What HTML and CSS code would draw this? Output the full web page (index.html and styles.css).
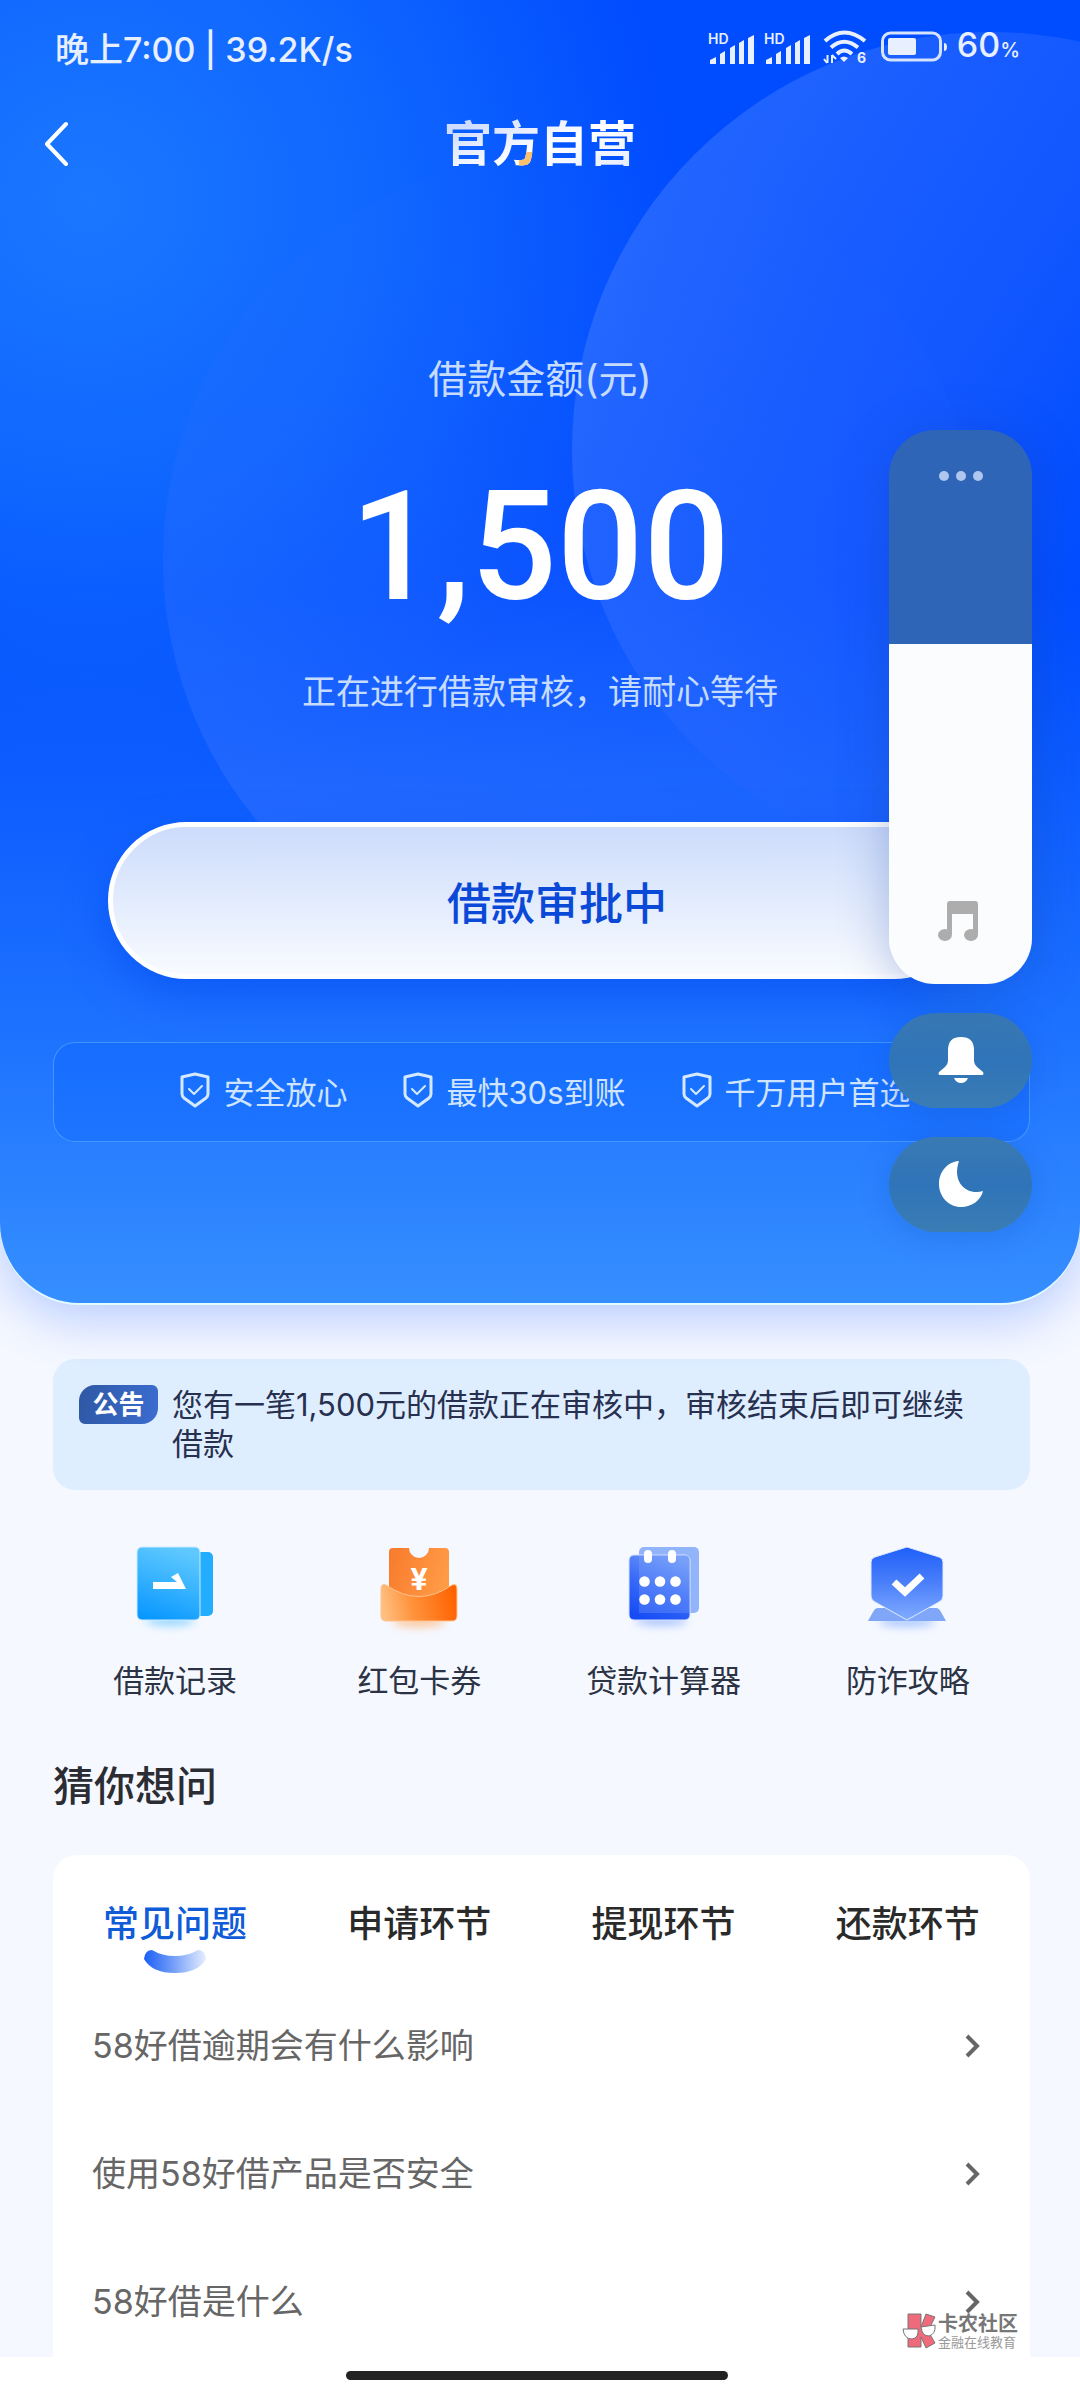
FILE: index.html
```html
<!DOCTYPE html>
<html lang="zh-CN">
<head>
<meta charset="utf-8">
<meta name="viewport" content="width=device-width, initial-scale=1">
<title>官方自营</title>
<link rel="stylesheet" href="styles.css">
</head>
<body>
<div class="app">
  <header class="hero">
    <svg class="hero-art" viewBox="0 0 1080 1303" preserveAspectRatio="xMidYMin slice" aria-hidden="true">
      <defs>
        <linearGradient id="orbA" x1="0" y1="0.3" x2=".8" y2="0.8">
          <stop offset="0" stop-color="#3f7bff" stop-opacity=".55"/>
          <stop offset=".5" stop-color="#2a66ff" stop-opacity=".4"/>
          <stop offset=".8" stop-color="#1a5cff" stop-opacity="0"/>
        </linearGradient>
        <linearGradient id="orbB" x1=".7" y1="0" x2=".4" y2="1">
          <stop offset="0" stop-color="#2e6dff" stop-opacity="0"/>
          <stop offset=".4" stop-color="#2e6dff" stop-opacity=".15"/>
          <stop offset="1" stop-color="#3d78ff" stop-opacity=".5"/>
        </linearGradient>
      </defs>
      <circle cx="572" cy="560" r="409" fill="url(#orbB)"/>
      <circle cx="990" cy="450" r="418" fill="url(#orbA)"/>
    </svg>

    <div class="status">
      <span class="status-left">晚上7:00 | 39.2K/s</span>
      <div class="status-right">
        <svg width="48" height="40" viewBox="0 -6 48 40" fill="#e8efff" aria-label="HD 信号">
          <text x="1" y="11" class="hd">HD</text>
          <path d="M3 31v-4l6-3v7zM13 31v-10l5-3v13zM23 31V15l5-3v19zM32 31V10l5-3v24zM41 31V5l6-3v29z"/>
        </svg>
        <svg width="48" height="40" viewBox="0 -6 48 40" fill="#e8efff" aria-label="HD 信号">
          <text x="1" y="11" class="hd">HD</text>
          <path d="M3 31v-4l6-3v7zM13 31v-10l5-3v13zM23 31V15l5-3v19zM32 31V10l5-3v24zM41 31V5l6-3v29z"/>
        </svg>
        <svg class="wifi" width="46" height="42" viewBox="0 -4 46 42" fill="none" stroke="#e8efff" stroke-width="4" aria-label="Wi-Fi 6">
          <path d="M2 11Q21-6 42 11M8 17.500Q21 6 35 17.500M14 24Q21 17 29 24"/>
          <path d="M17 28q4-3 8 0l-4 4z" fill="#e8efff" stroke="none"/>
          <path d="M4.500 25v8M9 25v8M1 29l3 4M9 25l4 4" stroke-width="2"/>
          <text x="34" y="33" class="six">6</text>
        </svg>
        <svg class="battery" width="68" height="32" viewBox="0 0 68 32" fill="none" aria-label="电池">
          <rect x="1.500" y="2" width="58" height="27" rx="8" stroke="#d5e3ff" stroke-width="3"/>
          <rect x="7" y="7" width="28" height="17" rx="2" fill="#e8efff"/>
          <path d="M63 12q3 0 3 4t-3 4z" fill="#e8efff"/>
        </svg>
        <span class="percent">60<small>%</small></span>
      </div>
    </div>

    <nav class="nav">
      <button class="back" aria-label="返回">
        <svg width="24" height="48" viewBox="0 0 24 48" fill="none" stroke="#fff" stroke-width="4" stroke-linecap="round" stroke-linejoin="round"><path d="M22 4 3 24l19 20"/></svg>
      </button>
      <h1 class="title">官方自营</h1>
    </nav>

    <p class="amount-label">借款金额(元)</p>
    <p class="amount">1,500</p>
    <p class="amount-note">正在进行借款审核，请耐心等待</p>
    <button class="cta">借款审批中</button>

    <ul class="trust">
      <li><svg class="shield" viewBox="0 0 30 36"><path class="o" d="M15 2 28 5v17q0 2-2 4L15 34 4 26q-2-2-2-4V5z"/><path class="c" d="m9 17 5 5 8-8"/></svg>安全放心</li>
      <li><svg class="shield" viewBox="0 0 30 36"><path class="o" d="M15 2 28 5v17q0 2-2 4L15 34 4 26q-2-2-2-4V5z"/><path class="c" d="m9 17 5 5 8-8"/></svg>最快30s到账</li>
      <li><svg class="shield" viewBox="0 0 30 36"><path class="o" d="M15 2 28 5v17q0 2-2 4L15 34 4 26q-2-2-2-4V5z"/><path class="c" d="m9 17 5 5 8-8"/></svg>千万用户首选</li>
    </ul>
  </header>

  <main class="content">
    <section class="notice">
      <strong class="badge">公告</strong>
      <p>您有一笔1,500元的借款正在审核中，审核结束后即可继续借款</p>
    </section>

    <nav class="services">
      <a href="#records">
        <svg width="90" height="96" viewBox="0 0 90 96">
          <defs>
            <linearGradient id="bk" x1=".6" y1="0" x2=".3" y2="1"><stop offset="0" stop-color="#5fc9ff"/><stop offset=".5" stop-color="#36b2ff"/><stop offset="1" stop-color="#0a98ff"/></linearGradient>
            <filter id="soft" x="-30%" y="-100%" width="160%" height="300%"><feGaussianBlur stdDeviation="4"/></filter>
          </defs>
          <ellipse cx="40" cy="81" rx="24" ry="5" fill="#6cc8ff" opacity=".7" filter="url(#soft)"/>
          <rect x="50" y="12" width="33" height="64" rx="5" fill="#22adff"/>
          <rect x="7" y="7" width="63" height="73" rx="5" fill="url(#bk)" stroke="#c9ecff"/>
          <path d="M23 42h24l-6-5 7-4 8 16H23z" fill="#fff"/>
        </svg>
        <span>借款记录</span>
      </a>
      <a href="#coupons">
        <svg width="90" height="96" viewBox="0 0 90 96">
          <defs>
            <linearGradient id="tk" x1="0" y1="0" x2="1" y2=".3"><stop offset="0" stop-color="#f87a2c"/><stop offset="1" stop-color="#ff9a45"/></linearGradient>
            <linearGradient id="pk" x1="0" y1=".6" x2="1" y2=".5"><stop offset="0" stop-color="#ffc183"/><stop offset=".4" stop-color="#ff933c"/><stop offset="1" stop-color="#ff6200"/></linearGradient>
          </defs>
          <ellipse cx="45" cy="82" rx="26" ry="5" fill="#ffb070" opacity=".7" filter="url(#soft)"/>
          <path d="M19 8h16a10 10 0 0 0 20 0h16q4 0 4 4v50H15V12q0-4 4-4z" fill="url(#tk)"/>
          <path d="M12 45q33 23 66 0 5-2 5 4v27q0 5-5 5H12q-5 0-5-5V49q0-6 5-4z" fill="url(#pk)" stroke="#ffc38f"/>
          <text x="45" y="50" class="yen">¥</text>
        </svg>
        <span>红包卡券</span>
      </a>
      <a href="#calculator">
        <svg width="90" height="96" viewBox="0 0 90 96">
          <defs>
            <linearGradient id="cal" x1=".7" y1="0" x2=".3" y2="1"><stop offset="0" stop-color="#6f9af8"/><stop offset=".5" stop-color="#3a6cf8"/><stop offset="1" stop-color="#164cf5"/></linearGradient>
          </defs>
          <ellipse cx="42" cy="81" rx="26" ry="5" fill="#8caeff" opacity=".7" filter="url(#soft)"/>
          <rect x="20" y="7" width="60" height="66" rx="5" fill="#92b4fb"/>
          <rect x="10" y="15" width="61" height="65" rx="5" fill="url(#cal)" stroke="#d3e1ff"/>
          <path d="M20 73V15h51v58z" fill="#92b4fb" opacity=".25"/>
          <g fill="#fff"><rect x="25" y="10" width="8" height="13" rx="4"/><rect x="49" y="10" width="8" height="13" rx="4"/>
          <circle cx="25.500" cy="41.500" r="5.300"/><circle cx="41" cy="41.500" r="5.300"/><circle cx="56.500" cy="41.500" r="5.300"/><circle cx="25.500" cy="59.500" r="5.300"/><circle cx="41" cy="59.500" r="5.300"/><circle cx="56.500" cy="59.500" r="5.300"/></g>
        </svg>
        <span>贷款计算器</span>
      </a>
      <a href="#antifraud">
        <svg width="90" height="96" viewBox="0 0 90 96">
          <defs>
            <linearGradient id="sh" x1="0" y1="0" x2="0" y2="1"><stop offset="0" stop-color="#1f60fa"/><stop offset=".5" stop-color="#4b80fa"/><stop offset="1" stop-color="#82acff"/></linearGradient>
          </defs>
          <ellipse cx="44" cy="82" rx="28" ry="5" fill="#8cb2ff" opacity=".7" filter="url(#soft)"/>
          <path d="M15 68h58q3 0 5 4l5 9H5l5-9q2-4 5-4z" fill="#80a7f7"/>
          <path d="M44 7 76 17q4 1 4 5v34q0 4-4 6L44 80 12 62q-4-2-4-6V22q0-4 4-5z" fill="url(#sh)" stroke="#dfeaff"/>
          <path d="m31 42 11 10 17-16" fill="none" stroke="#fff" stroke-width="7"/>
        </svg>
        <span>防诈攻略</span>
      </a>
    </nav>

    <h2 class="faq-title">猜你想问</h2>
    <section class="faq">
      <div class="tabs" role="tablist">
        <button class="tab active" role="tab" aria-selected="true">常见问题
          <svg width="64" height="25" viewBox="0 0 64 25" aria-hidden="true"><defs><linearGradient id="sm"><stop offset="0" stop-color="#1a5ff5"/><stop offset=".45" stop-color="#6f9bf8"/><stop offset="1" stop-color="#e6eeff"/></linearGradient></defs><path d="M9 1q10 6 23 6t23-6q7 0 8 9-8 14-31 14T1 10Q2 1 9 1z" fill="url(#sm)"/></svg>
        </button>
        <button class="tab" role="tab" aria-selected="false">申请环节</button>
        <button class="tab" role="tab" aria-selected="false">提现环节</button>
        <button class="tab" role="tab" aria-selected="false">还款环节</button>
      </div>
      <div class="questions">
        <a href="#q1">58好借逾期会有什么影响<svg class="chev" viewBox="0 0 18 26"><path d="m4 3 10 10L4 23"/></svg></a>
        <a href="#q2">使用58好借产品是否安全<svg class="chev" viewBox="0 0 18 26"><path d="m4 3 10 10L4 23"/></svg></a>
        <a href="#q3">58好借是什么<svg class="chev" viewBox="0 0 18 26"><path d="m4 3 10 10L4 23"/></svg></a>
      </div>
    </section>
  </main>

  <footer class="home"><span class="home-bar"></span></footer>

  <aside class="volume">
    <div class="volume-panel">
      <input type="range" min="0" max="100" value="61" aria-label="媒体音量">
      <button class="more" aria-label="更多"><i></i><i></i><i></i></button>
      <svg class="note" width="42" height="42" viewBox="0 0 42 42" fill="#adadad" aria-hidden="true"><path d="M10 4q0-3 3-3h25q3 0 3 3v30h-5V14H15v20h-5z"/><ellipse cx="8" cy="35" rx="7" ry="6"/><ellipse cx="34" cy="35" rx="7" ry="6"/></svg>
    </div>
    <button class="pill" aria-label="响铃">
      <svg width="46" height="48" viewBox="0 0 46 48" fill="#fff"><path d="M10 14q0-13 13-13t13 13v11q0 3 3 6l6 5q1 1 0 3H1q-1-2 0-3l6-5q3-3 3-6z"/><path d="M16 42h14q-2 5-7 5t-7-5z"/></svg>
    </button>
    <button class="pill" aria-label="勿扰">
      <svg width="46" height="48" viewBox="0 0 46 48" fill="#fff"><path d="M21 1C9 2 1 12 1 24c0 13 10 23 22 23 11 0 20-7 22-16-14 5-32-7-24-30z"/></svg>
    </button>
  </aside>

  <div class="watermark">
    <svg width="36" height="38" viewBox="0 0 36 38">
      <path d="M6 2h13v13l5-13 9 3-7 14 7 12-9 5-5-11v10H6z" fill="#ef6b7b" stroke="#777"/>
      <path d="M1 17h15q1 9-6 10-8 0-9-10zM19 15l14-2q1 9-6 11-7 0-8-9z" fill="#fff" stroke="#777"/>
    </svg>
    <div><b>卡农社区</b><span>金融在线教育</span></div>
  </div>
</div>
</body>
</html>
```
FILE: styles.css
```css
* { box-sizing: border-box; }

body {
  margin: 0;
  background: #fff;
  font-family: Inter, "Noto Sans CJK SC", sans-serif;
}

p, h1, h2, ul { margin: 0; padding: 0; }
ul { list-style: none; }
a { color: inherit; text-decoration: none; }
svg { flex: none; display: block; }

button {
  padding: 0;
  border: 0;
  background: none;
  color: inherit;
  font: inherit;
}

.app {
  position: relative;
  min-height: 100vh;
  display: flex;
  flex-direction: column;
  background: #f5f8ff;
}

/* Hero */
.hero {
  position: relative;
  z-index: 1;
  display: flex;
  flex-direction: column;
  align-items: center;
  padding-bottom: 161px;
  border-radius: 0 0 80px 80px;
  color: #fff;
  text-align: center;
  background:
    linear-gradient(180deg, rgba(30, 115, 255, 0) 45%, #1e73ff 80%, #368fff 100%),
    radial-gradient(circle at 90px 200px, #1b77ff 0, #0f66ff 300px, #004cff 580px, #004cff 100%);
  box-shadow: 0 2px 0 #e2fbff, 0 16px 50px rgba(40, 100, 255, .3);
}

.hero > * { position: relative; }

.hero .hero-art {
  position: absolute;
  inset: 0;
  width: 100%;
  height: 960px;
}

.status {
  align-self: stretch;
  height: 94px;
  padding: 0 60px 0 55px;
  display: flex;
  align-items: center;
  justify-content: space-between;
  color: #e8efff;
  font-weight: 500;
}

.status-left { font-size: 34px; }

.status-right {
  display: flex;
  align-items: center;
  gap: 8px;
}

.hd { font-size: 14px; font-weight: 600; }
.six { font-size: 14px; font-weight: 700; fill: #e8efff; stroke: none; }
.wifi { margin-left: 4px; }
.battery { margin-left: 4px; }
.percent { font-size: 34px; line-height: 40px; }
.percent small { font-size: 20px; }

.nav {
  align-self: stretch;
  height: 100px;
  padding: 0 44px;
  display: grid;
  grid-template-columns: 1fr auto 1fr;
  align-items: center;
}

.title {
  font-size: 48px;
  line-height: 60px;
  font-weight: 700;
  color: transparent;
  background:
    linear-gradient(#ffc06b, #ffc06b) 75px 38px / 19px 22px no-repeat,
    linear-gradient(160deg, #cfdcff 15%, #fff 55%, #dfe8ff);
  -webkit-background-clip: text;
  background-clip: text;
}

.amount-label {
  margin-top: 161px;
  font-size: 39px;
  line-height: 48px;
  color: #c6dcff;
}

.amount {
  margin-top: 64px;
  font-family: Roboto, sans-serif;
  font-size: 152px;
  line-height: 160px;
  font-weight: 500;
}

.amount-note {
  margin-top: 41px;
  font-size: 34px;
  line-height: 48px;
  color: #c6dcff;
}

.cta {
  width: 80%;
  height: 157px;
  margin-top: 106px;
  padding-left: 34px;
  border: 5px solid #fff;
  border-radius: 80px;
  background: linear-gradient(#cddcfb, #f8fbff);
  box-shadow: 0 16px 40px rgba(0, 70, 240, .5);
  color: #0a49d8;
  font-size: 44px;
  font-weight: 500;
}

.trust {
  align-self: stretch;
  height: 100px;
  margin: 63px 50px 0 53px;
  padding: 0 0 4px 8px;
  display: flex;
  align-items: center;
  justify-content: center;
  gap: 56px;
  border: 1px solid rgba(110, 190, 255, .5);
  border-radius: 22px;
  background: rgba(0, 92, 255, .25);
  color: #cfe4ff;
  font-size: 31px;
  white-space: nowrap;
}

.trust li {
  display: flex;
  align-items: center;
  gap: 13px;
}

.shield {
  width: 30px;
  height: 36px;
  fill: none;
  stroke: #d4e9ff;
  stroke-linejoin: round;
  stroke-linecap: round;
}
.shield .o { stroke-width: 3; }
.shield .c { stroke-width: 2; }

/* Content */
.content {
  flex: 1;
  padding: 56px 50px 0 53px;
}

.notice {
  display: flex;
  align-items: flex-start;
  gap: 14px;
  padding: 26px 50px 27px 26px;
  border-radius: 22px;
  background: #dfeeff;
  color: #28304f;
  font-size: 31px;
  line-height: 39px;
}

.badge {
  flex: none;
  width: 79px;
  border-radius: 16px 6px 16px 6px;
  background: linear-gradient(100deg, #2f58a4, #3b6dd0);
  color: #fff;
  font-size: 26px;
  font-weight: 700;
  text-align: center;
}

.services {
  margin-top: 50px;
  display: grid;
  grid-template-columns: repeat(4, 1fr);
}

.services a {
  display: flex;
  flex-direction: column;
  align-items: center;
  gap: 25px;
  color: #2b3344;
  font-size: 31px;
  line-height: 40px;
}

.yen {
  font: 700 32px Roboto, sans-serif;
  fill: #fff;
  text-anchor: middle;
}

.faq-title {
  margin-top: 57px;
  font-size: 41px;
  line-height: 56px;
  font-weight: 500;
  color: #2b2d33;
}

.faq {
  margin-top: 41px;
  padding: 44px 0 31px;
  border-radius: 24px 24px 0 0;
  background: #fff;
}

.tabs {
  display: grid;
  grid-template-columns: repeat(4, 1fr);
  align-items: start;
}

.tab {
  display: flex;
  flex-direction: column;
  align-items: center;
  color: #2a2a2a;
  font-size: 36px;
  line-height: 50px;
  font-weight: 500;
}

.tab.active { color: #0f5bd8; }

.questions {
  margin-top: 48px;
  padding: 0 49px 0 39px;
  display: flex;
  flex-direction: column;
  gap: 80px;
}

.questions a {
  display: flex;
  align-items: center;
  justify-content: space-between;
  color: #666;
  font-size: 34px;
  line-height: 48px;
}

.chev {
  width: 18px;
  height: 26px;
  fill: none;
  stroke: #666;
  stroke-width: 4;
}

.home {
  height: 43px;
  padding: 0 6px 6px 0;
  display: flex;
  justify-content: center;
  align-items: center;
  background: #fff;
}

.home-bar {
  width: 382px;
  height: 9px;
  border-radius: 5px;
  background: #222;
}

/* System volume overlay */
.volume {
  position: absolute;
  z-index: 2;
  top: 430px;
  right: 48px;
  width: 143px;
  display: flex;
  flex-direction: column;
  gap: 29px;
}

.volume-panel {
  position: relative;
  height: 554px;
  border-radius: 46px;
  box-shadow: 0 6px 50px rgba(20, 60, 160, .3);
}

.volume-panel input {
  appearance: none;
  writing-mode: vertical-lr;
  direction: rtl;
  display: block;
  width: 100%;
  height: 100%;
  margin: 0;
  border-radius: 46px;
  background: linear-gradient(to top, #fbfcfe 340px, #2f65b6 340px);
}

.volume-panel input::-webkit-slider-thumb {
  appearance: none;
  width: 1px;
  height: 1px;
}

.more {
  position: absolute;
  top: 30px;
  left: 0;
  right: 0;
  height: 32px;
  display: flex;
  align-items: center;
  justify-content: center;
  gap: 7px;
}

.more i {
  width: 10px;
  height: 10px;
  border-radius: 50%;
  background: #afc6ef;
}

.note {
  position: absolute;
  left: 48px;
  bottom: 42px;
}

.pill {
  height: 95px;
  padding-bottom: 2px;
  display: flex;
  align-items: center;
  justify-content: center;
  border-radius: 48px;
  background: linear-gradient(#3a7ab4, #2f74b8 50%, #3a7cb4);
  box-shadow: 0 4px 30px rgba(20, 70, 180, .25);
}

.watermark {
  position: absolute;
  z-index: 3;
  right: 62px;
  bottom: 50px;
  display: flex;
  align-items: center;
  color: #777;
}

.watermark div {
  display: flex;
  flex-direction: column;
}

.watermark b { font-size: 20px; line-height: 22px; }
.watermark span { font-size: 13px; line-height: 14px; color: #999; }
```
